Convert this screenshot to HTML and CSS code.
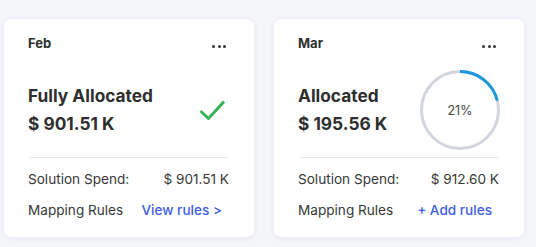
FILE: index.html
```html
<!DOCTYPE html>
<html>
<head>
<meta charset="utf-8">
<link rel="stylesheet" href="styles.css">
</head>
<body>
<div class="cards">
  <div class="card">
    <div class="card-head">
      <span class="month">Feb</span>
      <span class="more"><i></i><i></i><i></i></span>
    </div>
    <div class="card-main">
      <div class="title">
        <div>Fully Allocated</div>
        <div>$ 901.51 K</div>
      </div>
      <svg class="check" width="26" height="20" viewBox="0 0 26 20"><polyline points="1.5,11 9.5,18.5 25,1.5" fill="none" stroke="#3bb25a" stroke-width="3"/></svg>
    </div>
    <div class="divider"></div>
    <div class="row"><span>Solution Spend:</span><span class="val">$ 901.51 K</span></div>
    <div class="row"><span>Mapping Rules</span><a class="link">View rules &gt;</a></div>
  </div>
  <div class="card">
    <div class="card-head">
      <span class="month">Mar</span>
      <span class="more"><i></i><i></i><i></i></span>
    </div>
    <div class="card-main">
      <div class="title">
        <div>Allocated</div>
        <div>$ 195.56 K</div>
      </div>
      <div class="ring">
        <svg width="80" height="80" viewBox="0 0 80 80">
          <circle cx="40" cy="40" r="38.5" fill="none" stroke="#d2d6dc" stroke-width="3"/>
          <circle cx="40" cy="40" r="38.5" fill="none" stroke="#1b98dc" stroke-width="3" stroke-dasharray="50.8 242" transform="rotate(-90 40 40)"/>
        </svg>
        <span class="pct">21%</span>
      </div>
    </div>
    <div class="divider"></div>
    <div class="row"><span>Solution Spend:</span><span class="val">$ 912.60 K</span></div>
    <div class="row"><span>Mapping Rules</span><a class="link">+ Add rules</a></div>
  </div>
</div>
</body>
</html>
```

FILE: styles.css
```css
* { box-sizing: border-box; }
html, body { margin: 0; }
body {
  background: #f5f6fa;
  font-family: Inter, "Noto Sans", sans-serif;
  color: #2f2f2f;
  width: 536px;
  height: 247px;
  overflow: hidden;
}
.cards {
  display: flex;
  gap: 20px;
  padding: 19px 0 0 4px;
}
.card {
  width: 250px;
  height: 218px;
  background: #fff;
  border-radius: 7px;
  box-shadow: 0 1px 6px rgba(40, 50, 90, 0.08);
  padding: 16px 24px 0 24px;
  display: flex;
  flex-direction: column;
}
.card-head {
  display: flex;
  justify-content: space-between;
  align-items: flex-start;
  height: 16px;
}
.month {
  font-size: 13px;
  font-weight: 700;
  line-height: 16px;
}
.more {
  display: flex;
  gap: 2.5px;
  margin-top: 10px;
  margin-right: 4px;
}
.more i {
  width: 3px;
  height: 3px;
  border-radius: 50%;
  background: #333;
}
.card-main {
  margin-top: 19px;
  height: 80px;
  display: flex;
  align-items: center;
  justify-content: space-between;
}
.title {
  font-size: 17.3px;
  font-weight: 700;
  line-height: 28px;
}
.check { margin-right: 5px; }
.ring {
  position: relative;
  width: 80px;
  height: 80px;
}
.ring svg { display: block; }
.pct {
  position: absolute;
  inset: 0;
  display: flex;
  align-items: center;
  justify-content: center;
  font-size: 12.5px;
  color: #444;
}
.divider {
  margin: 7px 2px 5px;
  height: 1px;
  background: #e3e5ea;
}
.row {
  height: 31px;
  display: flex;
  align-items: center;
  justify-content: space-between;
  font-size: 13.6px;
  color: #383838;
}
.val { margin-right: 1px; }
.link {
  color: #3d5ee6;
  font-weight: 500;
  padding: 0 8px;
  cursor: pointer;
}
```
